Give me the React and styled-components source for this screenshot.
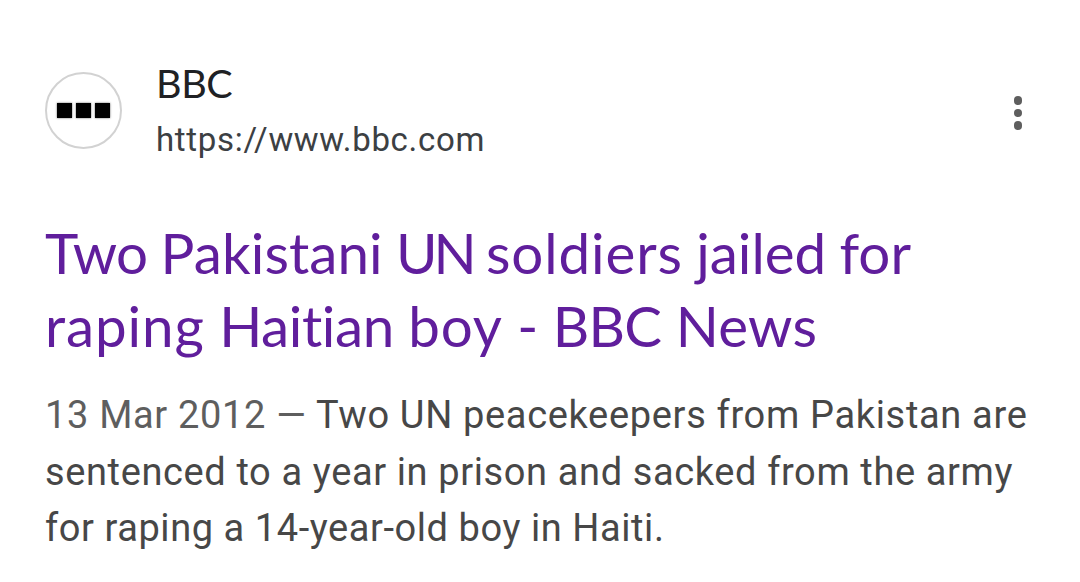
import styled, { createGlobalStyle } from 'styled-components';

const GlobalStyle = createGlobalStyle`
  * {
    box-sizing: border-box;
  }

  body {
    margin: 0;
    background: #fff;
  }
`;

const Result = styled.article`
  width: 1080px;
  height: 582px;
  padding: 55px 45px 0;
  overflow: hidden;
  background: #fff;
  font-family: Roboto, sans-serif;
`;

const Source = styled.header`
  display: flex;
  align-items: center;
  height: 111px;
`;

const Favicon = styled.div`
  display: flex;
  align-items: center;
  justify-content: center;
  gap: 4px;
  width: 77px;
  height: 77px;
  margin-right: 34px;
  border: 2px solid #d2d2d2;
  border-radius: 50%;
`;

const Block = styled.span`
  width: 15px;
  height: 15px;
  background: #000;
  box-shadow: 0 0 2px rgba(0, 0, 0, 0.6);
`;

const SourceText = styled.div`
  flex: 1;
`;

const SiteName = styled.div`
  color: #202124;
  font-family: Lato, sans-serif;
  font-size: 39.5px;
  line-height: 56px;
  letter-spacing: -0.4px;
`;

const SiteUrl = styled.div`
  padding-top: 1px;
  margin-bottom: -1px;
  color: #3c4043;
  font-size: 33px;
  line-height: 55px;
  letter-spacing: 0.68px;
`;

const MenuButton = styled.button`
  display: flex;
  flex-direction: column;
  align-items: center;
  gap: 4px;
  padding: 5px 0 0;
  margin-right: 13px;
  border: none;
  background: none;
`;

const Dot = styled.span`
  width: 8.5px;
  height: 8.5px;
  border-radius: 50%;
  background: #5e5e5e;
`;

const Title = styled.h3`
  margin: 50px 0 0;
  color: #601e9c;
  font-family: Lato, sans-serif;
  font-size: 56.5px;
  font-weight: 400;
  font-variant-ligatures: none;
  line-height: 73px;
`;

const TitleLine = styled.span`
  display: block;
  white-space: nowrap;
  word-spacing: ${({ $gap }) => $gap};
`;

const Word = styled.span`
  letter-spacing: ${({ $spacing }) => $spacing};
`;

const Snippet = styled.p`
  margin: 25px 0 0;
  color: #474747;
  font-size: 38px;
  line-height: 56.5px;
`;

const SnippetLine = styled.span`
  display: block;
  white-space: nowrap;
  letter-spacing: ${({ $spacing }) => $spacing};
`;

const PublishedAt = styled.span`
  color: #5e5e5e;
`;

const App = () => (
  <>
    <GlobalStyle />
    <Result>
      <Source>
        <Favicon>
          <Block />
          <Block />
          <Block />
        </Favicon>
        <SourceText>
          <SiteName>BBC</SiteName>
          <SiteUrl>https://www.bbc.com</SiteUrl>
        </SourceText>
        <MenuButton aria-label="More options">
          <Dot />
          <Dot />
          <Dot />
        </MenuButton>
      </Source>
      <Title>
        <TitleLine $gap="-1.2px">
          <Word $spacing="-0.7px">Two</Word> <Word $spacing="0.1px">Pakistani</Word>{' '}
          <Word $spacing="-4px">UN</Word> <Word $spacing="0.9px">soldiers</Word>{' '}
          <Word $spacing="0">jailed</Word> <Word $spacing="0">for</Word>
        </TitleLine>
        <TitleLine $gap="0">
          <Word $spacing="0.9px">raping</Word> <Word $spacing="-0.4px">Haitian</Word>{' '}
          <Word $spacing="0.9px">boy</Word> - <Word $spacing="-0.8px">BBC</Word>{' '}
          <Word $spacing="0.3px">News</Word>
        </TitleLine>
      </Title>
      <Snippet>
        <SnippetLine $spacing="0.67px">
          <PublishedAt>13 Mar 2012 — </PublishedAt>
          Two UN peacekeepers from Pakistan are
        </SnippetLine>
        <SnippetLine $spacing="0.62px">sentenced to a year in prison and sacked from the army</SnippetLine>
        <SnippetLine $spacing="0.57px">for raping a 14-year-old boy in Haiti.</SnippetLine>
      </Snippet>
    </Result>
  </>
);

export default App;
